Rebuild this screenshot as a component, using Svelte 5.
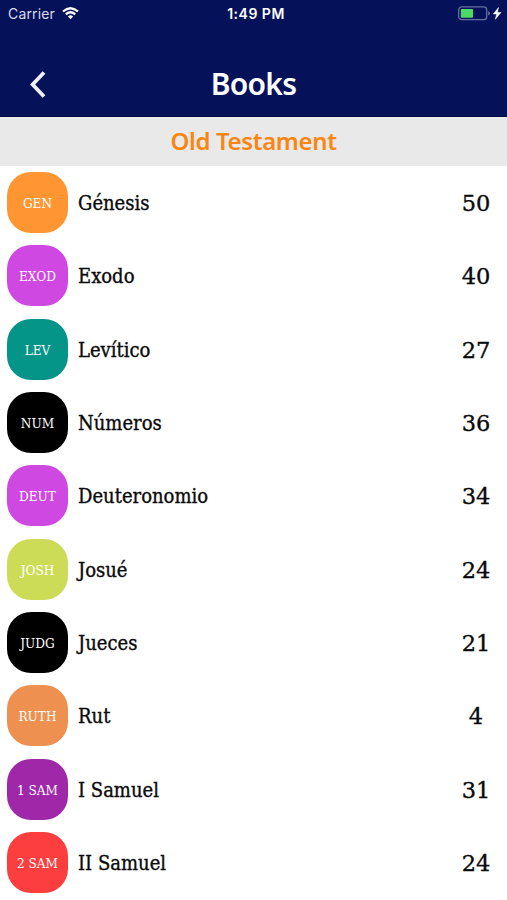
<script lang="ts">
	type Book = { code: string; name: string; chapters: number; color: string };

	const books: Book[] = [
		{ code: 'GEN', name: 'Génesis', chapters: 50, color: '#ff9632' },
		{ code: 'EXOD', name: 'Exodo', chapters: 40, color: '#d048e2' },
		{ code: 'LEV', name: 'Levítico', chapters: 27, color: '#059588' },
		{ code: 'NUM', name: 'Números', chapters: 36, color: '#000000' },
		{ code: 'DEUT', name: 'Deuteronomio', chapters: 34, color: '#d048e2' },
		{ code: 'JOSH', name: 'Josué', chapters: 24, color: '#cddc57' },
		{ code: 'JUDG', name: 'Jueces', chapters: 21, color: '#000000' },
		{ code: 'RUTH', name: 'Rut', chapters: 4, color: '#ee9050' },
		{ code: '1 SAM', name: 'I Samuel', chapters: 31, color: '#9e28a8' },
		{ code: '2 SAM', name: 'II Samuel', chapters: 24, color: '#fd3e3e' }
	];
</script>

<div class="screen">
	<header>
		<div class="status">
			<div class="carrier">
				<span>Carrier</span>
				<svg width="17" height="13" viewBox="0 0 17 13" aria-hidden="true">
					<path d="M1 4.5 Q8.5 -2 16 4.5" />
					<path d="M3.8 7.3 Q8.5 3.3 13.2 7.3" />
					<path class="dot" d="M5.9 9.5 Q8.5 7.2 11.1 9.5 L8.5 12.3 Z" />
				</svg>
			</div>
			<span class="time">1:49 PM</span>
			<div class="battery">
				<svg width="44" height="15" viewBox="0 0 44 15" aria-hidden="true">
					<rect class="case" x="0.7" y="0.9" width="28" height="12.8" rx="3" />
					<rect class="level" x="2.8" y="2.9" width="12.2" height="8.8" rx="0.8" />
					<path class="cap" d="M30.2 5 Q34 7.3 30.2 9.6 Z" />
					<path class="bolt" d="M40.5 1.5 L35.3 8 H38.7 L37.3 13.3 L43 6.5 H39.5 Z" />
				</svg>
			</div>
		</div>
		<div class="nav">
			<button type="button" class="back" aria-label="Back">
				<svg width="16" height="27" viewBox="0 0 16 27" aria-hidden="true">
					<path d="M14 1.5 L2.6 13.5 L14 25.5" />
				</svg>
			</button>
			<h1>Books</h1>
		</div>
	</header>

	<h2>Old Testament</h2>

	<ul>
		{#each books as book (book.code)}
			<li>
				<span class="badge" style="background: {book.color}">{book.code}</span>
				<span class="name">{book.name}</span>
				<span class="chapters">{book.chapters}</span>
			</li>
		{/each}
	</ul>
</div>

<style>
	:global(body) {
		background: #fff;
	}

	.screen {
		width: 507px;
		height: 900px;
		overflow: hidden;
		background: #fff;
		color: #0a0a0a;
		font-family: 'DejaVu Serif Condensed', 'DejaVu Serif', serif;
		font-stretch: condensed;
	}

	header {
		height: 117px;
		box-sizing: border-box;
		background: #051158;
		border-bottom: 1px solid #03094a;
		color: #fff;
	}

	.status {
		display: grid;
		grid-template-columns: 1fr auto 1fr;
		align-items: center;
		height: 27px;
		padding: 0 5px 0 8px;
		font-family: Inter, 'Liberation Sans', sans-serif;
		font-size: 14px;
	}

	.carrier {
		display: flex;
		align-items: center;
		gap: 7px;
		color: #d9dcec;
		letter-spacing: 0.15px;
	}

	.carrier svg {
		fill: none;
		stroke: #fff;
		stroke-width: 2.3;
	}

	.carrier .dot {
		fill: #fff;
		stroke: none;
	}

	.time {
		position: relative;
		left: 1px;
		font-weight: 600;
		letter-spacing: 0.5px;
	}

	.battery {
		display: flex;
		justify-content: flex-end;
	}

	.case {
		fill: none;
		stroke: #66709f;
		stroke-width: 1.3;
	}

	.level {
		fill: #4cd964;
	}

	.cap {
		fill: #66709f;
	}

	.bolt {
		fill: #fff;
		stroke: #fff;
		stroke-width: 0.5;
	}

	.nav {
		display: grid;
		grid-template-columns: 76px 1fr 76px;
		align-items: center;
		height: 89px;
		padding-top: 25px;
		box-sizing: border-box;
	}

	.back {
		display: flex;
		justify-content: center;
		padding: 0;
		border: none;
		background: none;
	}

	.back path {
		fill: none;
		stroke: #eef0fa;
		stroke-width: 3.8;
	}

	h1,
	h2 {
		margin: 0;
		font-family: 'Noto Sans', 'Open Sans', sans-serif;
		font-stretch: normal;
		font-weight: 600;
		text-align: center;
	}

	h1 {
		font-size: 30px;
		line-height: 40px;
		letter-spacing: -0.7px;
	}

	h2 {
		height: 49px;
		background: #e9e9e9;
		color: #fa8611;
		font-size: 24px;
		line-height: 48px;
		letter-spacing: -0.35px;
	}

	ul {
		margin: 0;
		padding: 0;
		list-style: none;
	}

	li {
		display: flex;
		align-items: center;
		height: 73.3px;
		padding: 0 7px;
	}

	.badge {
		display: flex;
		align-items: center;
		justify-content: center;
		width: 61px;
		height: 61px;
		padding-top: 1px;
		box-sizing: border-box;
		border-radius: 24px;
		color: #fff;
		font-size: 13.5px;
		white-space: nowrap;
	}

	.name {
		flex: 1;
		margin-left: 10px;
		padding-top: 1px;
		font-size: 20px;
		-webkit-text-stroke: 0.35px;
	}

	.chapters {
		width: 48px;
		padding-top: 1px;
		font-family: 'DejaVu Serif', serif;
		font-stretch: normal;
		font-size: 22.5px;
		-webkit-text-stroke: 0.35px;
		text-align: center;
	}
</style>
